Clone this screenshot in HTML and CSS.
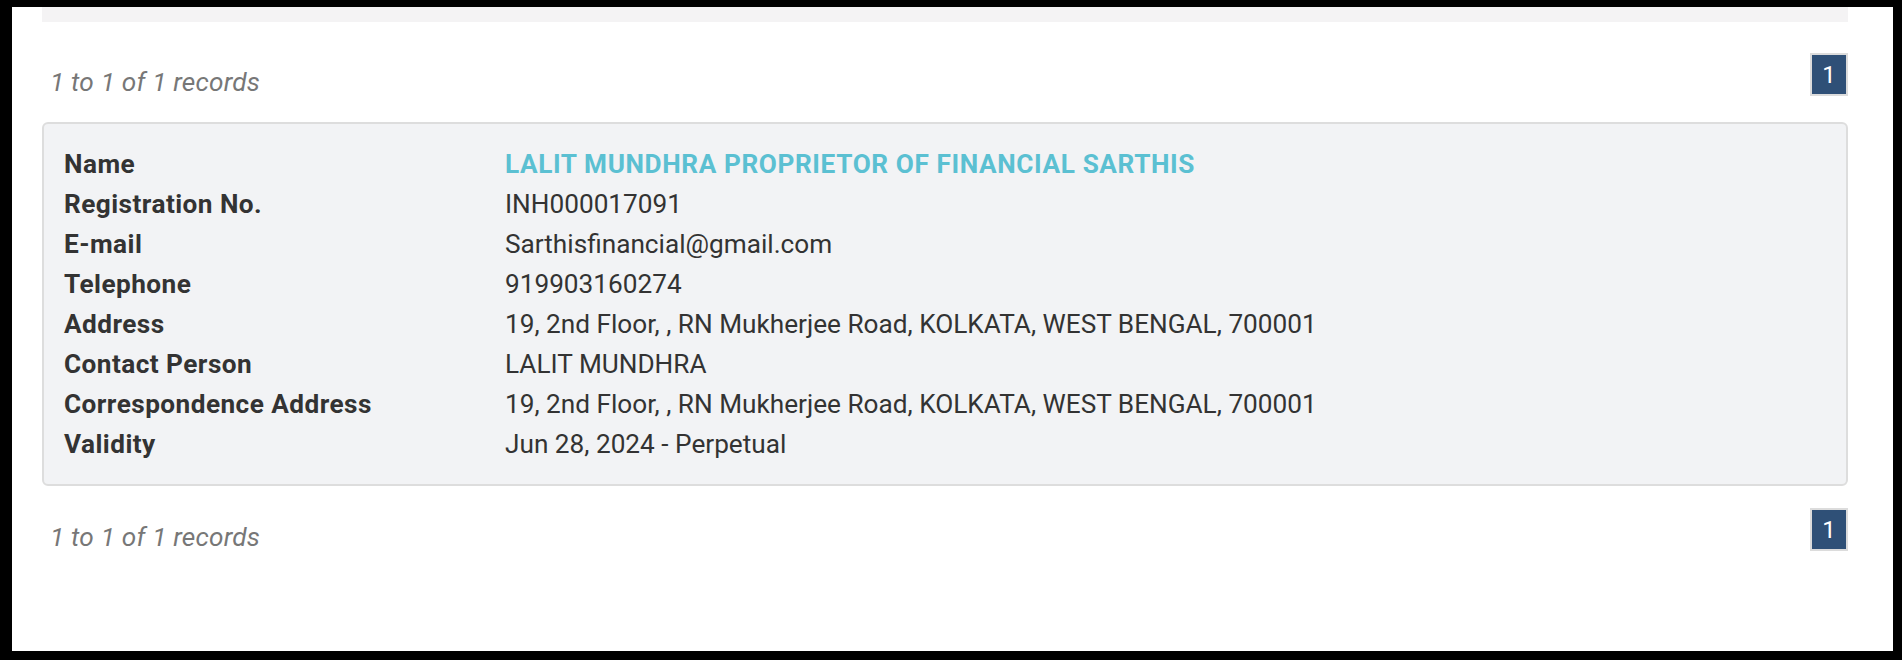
FILE: index.html
```html
<!DOCTYPE html>
<html lang="en">
<head>
<meta charset="utf-8">
<title>Records</title>
<link rel="stylesheet" href="styles.css">
</head>
<body>
<div class="frame">
  <div class="topbar"></div>
  <div class="pager-row top">
    <span class="records">1 to 1 of 1 records</span>
    <span class="page">1</span>
  </div>
  <div class="card">
    <div class="grid">
      <div class="label">Name</div><div class="value name">LALIT MUNDHRA PROPRIETOR OF FINANCIAL SARTHIS</div>
      <div class="label">Registration No.</div><div class="value">INH000017091</div>
      <div class="label">E-mail</div><div class="value">Sarthisfinancial@gmail.com</div>
      <div class="label">Telephone</div><div class="value">919903160274</div>
      <div class="label">Address</div><div class="value">19, 2nd Floor, , RN Mukherjee Road, KOLKATA, WEST BENGAL, 700001</div>
      <div class="label">Contact Person</div><div class="value">LALIT MUNDHRA</div>
      <div class="label">Correspondence Address</div><div class="value">19, 2nd Floor, , RN Mukherjee Road, KOLKATA, WEST BENGAL, 700001</div>
      <div class="label">Validity</div><div class="value">Jun 28, 2024 - Perpetual</div>
    </div>
  </div>
  <div class="pager-row bottom">
    <span class="records">1 to 1 of 1 records</span>
    <span class="page">1</span>
  </div>
</div>
</body>
</html>
```
FILE: styles.css
```css
html, body {
  margin: 0;
  padding: 0;
  background: #000;
}
body {
  padding: 7px 9px 9px 12px;
  height: 660px;
  box-sizing: border-box;
  font-family: Roboto, "Liberation Sans", sans-serif;
  font-size: 26.2px;
  line-height: 40px;
  color: #333;
}
.frame {
  background: #fff;
  height: 644px;
  padding: 0 45px 0 30px;
  box-sizing: border-box;
  overflow: hidden;
}
.topbar {
  height: 15px;
  background: #f4f3f4;
}
.pager-row {
  display: flex;
  justify-content: space-between;
  align-items: flex-start;
}
.pager-row.top {
  margin-top: 31px;
}
.pager-row.bottom {
  margin-top: 22px;
}
.records {
  margin-top: 9px;
  padding-left: 8px;
  font-style: italic;
  color: #777;
  letter-spacing: 0.2px;
}
.page {
  width: 38px;
  height: 43px;
  box-sizing: border-box;
  border: 2px solid #dcdcdc;
  background: #2f5077;
  color: #fff;
  display: flex;
  align-items: center;
  justify-content: center;
  font-size: 24px;
  line-height: 1;
}
.card {
  margin-top: 20px;
  background: #f2f3f5;
  border: 2px solid #dddddd;
  border-radius: 6px;
  padding: 20px 21px 20px 20px;
}
.grid {
  display: grid;
  grid-template-columns: 441px 1fr;
}
.label {
  font-weight: 700;
  letter-spacing: 0.45px;
}
.value.name {
  color: #5bc0d2;
  font-weight: 700;
  letter-spacing: 0.6px;
}
```
